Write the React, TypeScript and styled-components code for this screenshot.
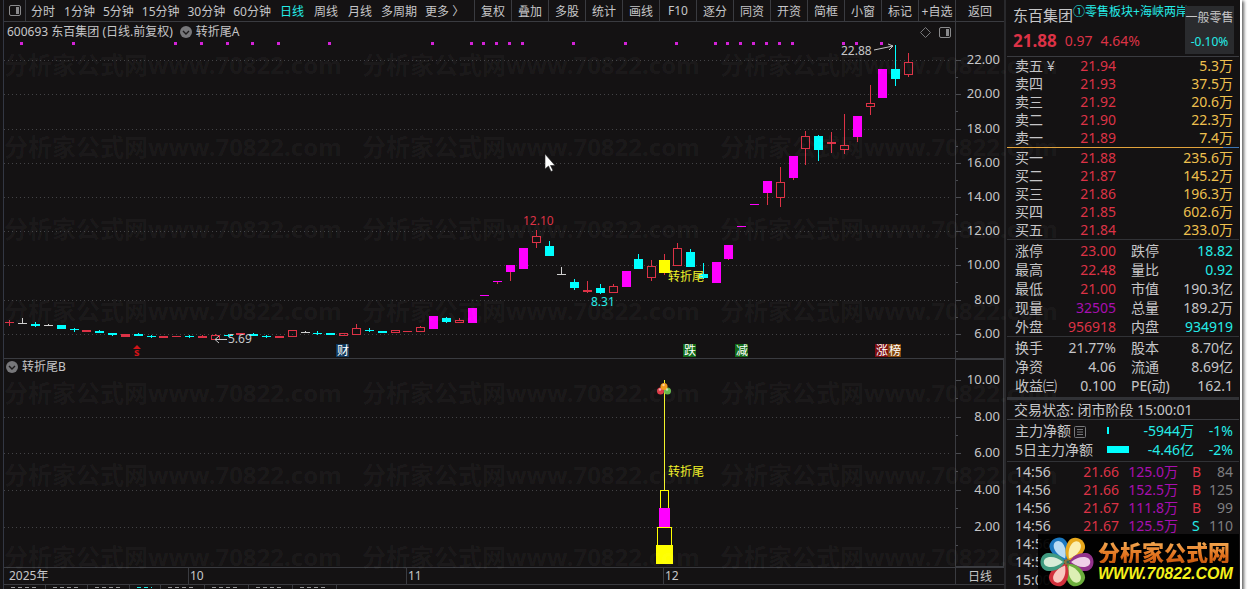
import React from "react";
import styled, { createGlobalStyle } from "styled-components";

const c = {
  bg: "#141213",
  line: "#3a3b40",
  text: "#c6c6c8",
  red: "#dc3246",
  cyan: "#24ece8",
  gold: "#eec04e",
  purple: "#a80fb0",
  grey: "#7e7e80",
  magenta: "#ff00ff",
  aqua: "#00ffff",
};

const Global = createGlobalStyle`
  *, *::before, *::after { box-sizing: border-box; }
  body {
    margin: 0;
    background: #fff;
    overflow: hidden;
    font-family: "Noto Sans", "Noto Sans CJK SC", sans-serif;
    font-size: 12px;
    color: ${c.text};
  }
  button { font: inherit; color: inherit; background: none; border: 0; padding: 0; cursor: pointer; }
  table { border-collapse: collapse; table-layout: fixed; width: 100%; }
  th, td { padding: 0; font-weight: 400; text-align: left; white-space: nowrap; }
`;

const Window = styled.main`
  position: relative;
  display: flex;
  margin-right: 8px;
  padding-left: 3px;
  background: ${c.bg};
  box-shadow: 0 0 0 2px #fff, 3px 2px 3px 1px #666;
`;

const Left = styled.section`
  flex: 1;
  min-width: 0;
  display: flex;
  flex-direction: column;
  border-left: 1px solid #333743;
  border-right: 2px solid #29292c;
`;

const Toolbar = styled.nav`
  display: flex;
  height: 22px;
  border-bottom: 1px solid ${c.line};
  white-space: nowrap;
`;

const IconButton = styled.button`
  display: flex;
  align-items: center;
  justify-content: center;
  width: 22px;
  border-right: 1px solid ${c.line};
`;

const Periods = styled.div`
  display: flex;
  flex: 1;
`;

const Period = styled.button<{ $tight?: boolean; $active?: boolean }>`
  padding: 0 ${(p) => (p.$tight ? 4 : 5)}px;
  color: ${(p) => (p.$active ? c.cyan : c.text)};
`;

const Tool = styled.button<{ $wide?: boolean }>`
  width: ${(p) => (p.$wide ? 49 : 37)}px;
  border-left: 1px solid ${c.line};
`;

const Pane = styled.div`
  display: flex;
  & + & { border-top: 1px solid ${c.line}; }
`;

const Plot = styled.div`
  flex: 1;
  min-width: 0;
`;

const PlotHead = styled.header<{ $h: number }>`
  display: flex;
  align-items: center;
  gap: 4px;
  height: ${(p) => p.$h}px;
  padding: 0 4px 0 2px;
  line-height: 16px;
`;

const Title = styled.span`
  padding: 0 3px 0 1px;
`;

const HeadTools = styled.div`
  display: flex;
  align-items: center;
  gap: 8px;
  margin-left: auto;
`;

const Drawing = styled.svg`
  display: block;
  width: 100%;
  overflow: hidden;
`;

const Axis = styled.div<{ $boxed?: boolean }>`
  width: 49px;
  flex: none;
  border: ${(p) => (p.$boxed ? `1px solid ${c.line}` : "0")};
  border-left: 1px solid ${c.line};
`;

const TimeRow = styled.div`
  display: flex;
  height: 17px;
  border-top: 1px solid ${c.line};
  line-height: 15px;
`;

const TimeCell = styled.div<{ $w?: number }>`
  ${(p) => (p.$w ? `width: ${p.$w}px; flex: none;` : "flex: 1;")}
  padding-left: 1px;
  & + & { border-left: 1px solid ${c.line}; }
  &:first-child { padding-left: 5px; }
`;

const TimeMode = styled.button`
  width: 49px;
  border-left: 1px solid ${c.line};
  line-height: 15px;
`;

const TabEdge = styled.div`
  display: flex;
  height: 5px;
  border-top: 1px solid ${c.line};
`;

const TabStub = styled.div<{ $w: number; $on?: boolean }>`
  width: ${(p) => p.$w}px;
  padding: 2px 8px 0 7px;
  border-right: 1px solid ${c.line};
  &::before {
    content: "";
    display: block;
    height: 1px;
    background: repeating-linear-gradient(90deg, ${(p) => (p.$on ? c.cyan : "#98989a")} 0 4px, transparent 4px 7px);
  }
`;

const Side = styled.aside`
  width: 234px;
  flex: none;
  position: relative;
  padding: 0 1px;
`;

const Quote = styled.header`
  display: flex;
  height: 57px;
  border-bottom: 1px solid ${c.line};
  padding: 6px 5px 0 6px;
`;

const QuoteMain = styled.div`
  flex: 1;
  min-width: 0;
`;

const NameRow = styled.div`
  display: flex;
  height: 22px;
  white-space: nowrap;
`;

const Name = styled.h1`
  margin: 0;
  font-size: 15px;
  font-weight: 400;
  line-height: 18px;
`;

const Sector = styled.a`
  color: ${c.cyan};
  line-height: 12px;
  text-decoration: none;
`;

const PriceRow = styled.div`
  display: flex;
  align-items: center;
  gap: 8px;
  height: 26px;
  font-size: 14px;
  line-height: 26px;
  color: ${c.red};
  strong { font-size: 17px; font-weight: 700; }
`;

const Industry = styled.div`
  width: 49px;
  height: 48px;
  background: #2a2b2e;
  text-align: center;
  line-height: 24px;
  white-space: nowrap;
  em { display: block; font-style: normal; color: ${c.cyan}; }
`;

const Block = styled.div<{ $rule?: number; $top?: number; $bottom?: number }>`
  padding: ${(p) => p.$top ?? 0}px 6px ${(p) => p.$bottom ?? 0}px 8px;
  border-bottom: ${(p) => p.$rule ?? 1}px solid #313236;
  font-size: 14px;
`;

const Spread = styled.div`
  height: 1px;
  background: linear-gradient(90deg, #e2a33c 93%, #3c74b4 93%);
`;

const Row = styled.tr<{ $h: number }>`
  height: ${(p) => p.$h}px;
  line-height: ${(p) => p.$h}px;
`;

const Cell = styled.td<{ $c?: string; $left?: boolean; $indent?: number }>`
  color: ${(p) => p.$c ?? c.text};
  && { text-align: ${(p) => (p.$left ? "left" : "right")}; }
  padding-left: ${(p) => p.$indent ?? 0}px;
`;

const Label = styled.th<{ $indent?: number }>`
  && { padding-left: ${(p) => p.$indent ?? 0}px; }
`;

const Status = styled.p`
  margin: 0;
  padding-left: 7px;
  border-bottom: 1px solid ${c.line};
  font-size: 14px;
  line-height: 19px;
  white-space: nowrap;
`;

const FlowBar = styled.div<{ $w: number }>`
  width: ${(p) => p.$w}px;
  height: 7px;
  background: ${c.aqua};
`;

const NoteIcon = styled.svg`
  margin-left: 3px;
  vertical-align: -2px;
`;

const Brand = styled.a`
  position: absolute;
  right: 1px;
  bottom: 0;
  display: flex;
  align-items: center;
  gap: 2px;
  width: 201px;
  height: 55px;
  background: rgba(0, 0, 0, 0.94);
  text-decoration: none;
  white-space: nowrap;
`;

const BrandName = styled.div`
  font: 900 22px/24px "Noto Sans CJK SC", sans-serif;
  background: linear-gradient(#f6b45c, #e0701c 70%, #c85a10);
  -webkit-background-clip: text;
  background-clip: text;
  color: transparent;
`;

const BrandUrl = styled.div`
  font: italic 700 16px/22px "Liberation Sans", sans-serif;
  color: #f4f01a;
`;

const Marks = styled.div`
  position: absolute;
  inset: 0;
  display: grid;
  grid-template-columns: repeat(3, 358px);
  grid-auto-rows: 82px;
  padding: 24px 0 0 4px;
  overflow: hidden;
  pointer-events: none;
  user-select: none;
  color: rgba(255, 255, 255, 0.045);
  font-size: 24px;
  font-weight: 700;
  line-height: 82px;
  white-space: nowrap;
`;

const Pointer = styled.svg`
  position: absolute;
  left: 544px;
  top: 153px;
`;

/* One candle per trading day: body top, body bottom, high, low, style. */
type Kind = "r" | "h" | "c" | "m" | "w" | "y";
type Candle = [number, number, number, number, Kind];
const candles: Candle[] = [
  [322, 323, 320, 326, "r"], [323, 324, 318, 324, "w"], [324, 326, 322, 327, "c"], [325, 326, 324, 326, "w"],
  [325, 329, 325, 329, "c"], [329, 330, 328, 332, "c"], [330, 332, 330, 332, "r"], [331, 333, 330, 333, "c"],
  [333, 335, 333, 336, "c"], [334, 337, 334, 337, "r"], [334, 336, 333, 336, "c"], [336, 337, 335, 338, "c"],
  [336, 338, 336, 338, "r"], [336, 337, 336, 337, "r"], [336, 337, 335, 338, "c"], [336, 338, 335, 338, "r"],
  [335, 340, 334, 340, "h"], [335, 336, 334, 337, "c"], [333, 335, 333, 335, "r"], [334, 336, 333, 336, "c"],
  [336, 337, 335, 338, "c"], [336, 338, 336, 338, "r"], [330, 337, 330, 337, "h"], [332, 333, 331, 333, "w"],
  [333, 334, 331, 335, "c"], [333, 335, 333, 335, "c"], [333, 336, 333, 336, "h"], [328, 335, 324, 335, "h"],
  [330, 331, 328, 332, "c"], [331, 333, 331, 333, "c"], [330, 333, 330, 333, "h"], [331, 332, 331, 332, "r"],
  [327, 332, 326, 332, "h"], [316, 329, 316, 329, "m"], [318, 322, 317, 323, "c"], [320, 323, 318, 323, "h"],
  [308, 323, 308, 323, "m"], [295, 296, 295, 296, "m"], [281, 282, 281, 284, "m"], [265, 272, 265, 281, "m"],
  [248, 269, 248, 269, "m"], [236, 243, 230, 248, "h"], [246, 256, 241, 256, "c"], [274, 275, 267, 275, "w"],
  [282, 288, 279, 290, "c"], [290, 292, 281, 293, "r"], [288, 293, 284, 294, "c"], [286, 293, 284, 293, "h"],
  [271, 287, 271, 287, "m"], [259, 269, 254, 269, "c"], [266, 278, 260, 281, "h"], [260, 273, 254, 275, "y"],
  [248, 266, 243, 266, "h"], [252, 267, 249, 267, "c"], [274, 278, 263, 279, "c"], [262, 283, 262, 283, "m"],
  [245, 259, 245, 260, "m"], [226, 227, 226, 227, "m"], [204, 205, 204, 205, "m"], [181, 193, 181, 205, "m"],
  [182, 198, 167, 207, "h"], [156, 178, 156, 180, "m"], [136, 149, 131, 165, "h"], [136, 150, 135, 161, "c"],
  [142, 144, 132, 153, "r"], [145, 150, 114, 154, "h"], [116, 137, 116, 142, "m"], [103, 107, 85, 115, "h"],
  [69, 98, 69, 98, "m"], [69, 79, 45, 86, "c"], [62, 75, 53, 77, "h"],
];
const fills: Record<Kind, string> = { r: c.red, h: c.red, c: c.aqua, m: c.magenta, w: "#d0d0d0", y: "#ffff00" };
const signalDays = [1, 5, 13, 15, 17, 19, 21, 25, 33, 36, 37, 38, 39, 40, 44, 48, 52, 55, 56, 57, 58, 59, 60, 61, 65, 66, 68];
const dayX = (i: number) => Math.floor(9.8 + i * 12.84);

const priceTicks: [number, string][] = [
  [60, "22.00"], [94, "20.00"], [129, "18.00"], [163, "16.00"], [197, "14.00"],
  [231, "12.00"], [265, "10.00"], [300, "8.00"], [334, "6.00"],
];
const lowerTicks: [number, string][] = [[380, "10.00"], [417, "8.00"], [453, "6.00"], [490, "4.00"], [527, "2.00"]];

const eventTags: [number, string, string][] = [
  [336, "财", "#11385c"], [683, "跌", "#126a18"], [735, "减", "#126a18"], [875, "涨", "#7c0c10"], [888, "榜", "#84460c"],
];

function CandleShape({ i, d }: { i: number; d: Candle }) {
  const [top, bottom, high, low, kind] = d;
  const x = dayX(i);
  const wick = kind === "m" || kind === "y" ? c.red : fills[kind];
  return (
    <g shapeRendering="crispEdges">
      {high < top && <rect x={x} y={high} width={1} height={top - high} fill={wick} />}
      {low > bottom && <rect x={x} y={bottom} width={1} height={low - bottom} fill={wick} />}
      {kind === "h" ? (
        <rect x={x - 3.5} y={top + 0.5} width={8} height={bottom - top - 1} fill="none" stroke={c.red} />
      ) : kind === "y" ? (
        <rect x={x - 5} y={top} width={11} height={bottom - top} fill={fills.y} />
      ) : (
        <rect x={x - 4} y={top} width={9} height={bottom - top} fill={fills[kind]} />
      )}
    </g>
  );
}

function Grid({ ys }: { ys: number[] }) {
  return (
    <g stroke="#434346" strokeDasharray="1 3" shapeRendering="crispEdges">
      {ys.map((y) => <line key={y} x1={4} x2="100%" y1={y + 0.5} y2={y + 0.5} />)}
    </g>
  );
}

function Scale({ ticks, top, height, step }: { ticks: [number, string][]; top: number; height: number; step: number }) {
  return (
    <Drawing height={height}>
      <g transform={`translate(0 ${-top})`} fill={c.text} fontSize={13}>
        {ticks.map(([y, t]) => (
          <g key={t}>
            <path d={`M0 ${y + 0.5}h5M0 ${y + step + 0.5}h2`} stroke="#4a4b50" />
            <text x={44} y={y + 4} textAnchor="end">{t}</text>
          </g>
        ))}
      </g>
    </Drawing>
  );
}

const Chevron = () => (
  <svg width="12" height="12" viewBox="0 0 12 12">
    <circle cx="6" cy="6" r="6" fill="#77777a" />
    <path d="M3 5l3 3 3-3" fill="none" stroke="#1c1a1b" strokeWidth="1.4" />
  </svg>
);

const PanelIcon = () => (
  <svg width="12" height="11" viewBox="0 0 12 11">
    <rect x=".5" y=".5" width="11" height="10" rx="1.5" fill="none" stroke="#8a8a8c" />
    <rect x="7" y="2" width="3" height="7" fill="#8a8a8c" />
  </svg>
);

const petals: [number, string, string][] = [
  [-118, "#1b78c0", "#b8dcf4"], [-60, "#e8a81c", "#fbeeb0"], [0, "#93328c", "#efcfe8"],
  [60, "#6cae3c", "#dcefb4"], [120, "#d0303c", "#f8c8c0"], [180, "#3f9a80", "#d8ecd8"],
];

const Flower = () => (
  <svg width="58" height="54" viewBox="-29 -27 58 54">
    {petals.map(([a, edge, core]) => (
      <g key={a} transform={`rotate(${a})`}>
        <path d="M2 0C6-7 13-9.5 19-9C29-8 29 8 19 9C13 9.500 6 7 2 0Z" fill={edge} />
        <path d="M4 0C9-4 13-5.500 18-5C25-4 25 4 18 5C13 5.500 9 4 4 0Z" fill={core} />
      </g>
    ))}
    <circle r="3" fill="#8a7440" />
    <circle r="1.500" cx="1" fill="#2f6a58" />
  </svg>
);

const sells = [["卖五 ¥", "21.94", "5.3万"], ["卖四", "21.93", "37.5万"], ["卖三", "21.92", "20.6万"], ["卖二", "21.90", "22.3万"], ["卖一", "21.89", "7.4万"]];
const buys = [["买一", "21.88", "235.6万"], ["买二", "21.87", "145.2万"], ["买三", "21.86", "196.3万"], ["买四", "21.85", "602.6万"], ["买五", "21.84", "233.0万"]];
const stats = [
  ["涨停", "23.00", c.red, "跌停", "18.82", c.cyan],
  ["最高", "22.48", c.red, "量比", "0.92", c.cyan],
  ["最低", "21.00", c.red, "市值", "190.3亿", c.text],
  ["现量", "32505", c.purple, "总量", "189.2万", c.text],
  ["外盘", "956918", c.red, "内盘", "934919", c.cyan],
];
const basics = [
  ["换手", "21.77%", c.text, "股本", "8.70亿", c.text],
  ["净资", "4.06", c.text, "流通", "8.69亿", c.text],
  ["收益㈢", "0.100", c.text, "PE(动)", "162.1", c.text],
];
const deals = [
  ["14:56", "21.66", "125.0万", "B", "84"], ["14:56", "21.66", "152.5万", "B", "125"],
  ["14:56", "21.67", "111.8万", "B", "99"], ["14:56", "21.67", "125.5万", "S", "110"],
  ["14:56", "", "", "", ""], ["14:56", "", "", "", ""], ["15:00", "", "", "", ""],
];

function Book({ rows }: { rows: string[][] }) {
  return (
    <table>
      <colgroup><col width={46} /><col width={55} /><col /></colgroup>
      <tbody>
        {rows.map(([n, p, v]) => (
          <Row key={n} $h={18}><Label scope="row">{n}</Label><Cell $c={c.red}>{p}</Cell><Cell $c={c.gold}>{v}</Cell></Row>
        ))}
      </tbody>
    </table>
  );
}

function Pairs({ rows }: { rows: string[][] }) {
  return (
    <table>
      <colgroup><col width={46} /><col width={55} /><col width={60} /><col /></colgroup>
      <tbody>
        {rows.map(([a, av, ac, b, bv, bc]) => (
          <Row key={a} $h={19}>
            <Label scope="row">{a}</Label><Cell $c={ac}>{av}</Cell>
            <Label scope="row" $indent={15}>{b}</Label><Cell $c={bc}>{bv}</Cell>
          </Row>
        ))}
      </tbody>
    </table>
  );
}

const periods: [string, boolean][] = [
  ["分时", false], ["1分钟", true], ["5分钟", true], ["15分钟", true], ["30分钟", true], ["60分钟", true],
  ["日线", false], ["周线", false], ["月线", false], ["多周期", true], ["更多 〉", true],
];
const tools = ["复权", "叠加", "多股", "统计", "画线", "F10", "逐分", "同资", "开资", "简框", "小窗", "标记", "+自选"];

export default function App() {
  return (
    <>
      <Global />
      <Window>
        <Marks aria-hidden="true">
          {Array.from({ length: 21 }, (_, i) => <span key={i}>分析家公式网www.70822.com</span>)}
        </Marks>
        <Left>
          <Toolbar>
            <IconButton aria-label="侧栏"><PanelIcon /></IconButton>
            <Periods>
              {periods.map(([p, tight]) => <Period key={p} $tight={tight} $active={p === "日线"}>{p}</Period>)}
            </Periods>
            {tools.map((t) => <Tool key={t}>{t}</Tool>)}
            <Tool $wide>返回</Tool>
          </Toolbar>

          <Pane>
            <Plot>
              <PlotHead $h={20}>
                <Title>600693 东百集团 (日线.前复权)</Title>
                <Chevron />
                <span>转折尾A</span>
                <HeadTools>
                  <svg width="11" height="11" viewBox="0 0 11 11"><path d="M5.500 .5l5 5-5 5-5-5z" fill="none" stroke="#77777a" /></svg>
                  <PanelIcon />
                </HeadTools>
              </PlotHead>
              <Drawing height={316}>
                <g transform="translate(-4 -42)">
                  <Grid ys={priceTicks.map(([y]) => y)} />
                  {signalDays.map((d) => <rect key={d} x={dayX(d) - 2} y={42} width={3} height={3} fill="#d322d8" />)}
                  {candles.map((d, i) => <CandleShape key={i} i={i} d={d} />)}
                  <text x={841} y={55} fontSize={12} fill={c.text}>22.88</text>
                  <path d="M874 50L893 46M888 44L893 46L889 50" fill="none" stroke={c.text} />
                  <text x={523} y={225} fontSize={12} fill={c.red}>12.10</text>
                  <text x={591} y={306} fontSize={12} fill={c.cyan}>8.31</text>
                  <path d="M227 339.500H215M219 336L215 339.500L219 343" fill="none" stroke={c.text} />
                  <text x={228} y={343} fontSize={12} fill={c.text}>5.69</text>
                  <text x={668} y={281} fontSize={12} fill="#f2f22a">转折尾</text>
                  <path d="M133 349L137 345L141 349Z" fill="#d01418" />
                  <text x={134} y={356} fontSize={11} fontWeight={700} fill="#d01418">s</text>
                  {eventTags.map(([x, t, f]) => (
                    <g key={t}>
                      <rect x={x} y={344} width={13} height={13} fill={f} />
                      <text x={x + 1} y={355} fontSize={12} fill="#fff">{t}</text>
                    </g>
                  ))}
                </g>
              </Drawing>
            </Plot>
            <Axis><Scale ticks={priceTicks} top={22} height={336} step={17} /></Axis>
          </Pane>

          <Pane>
            <Plot>
              <PlotHead $h={16}><Chevron /><span>转折尾B</span></PlotHead>
              <Drawing height={192}>
                <g transform="translate(-4 -375)" shapeRendering="crispEdges">
                  <Grid ys={[417, 453, 490, 527]} />
                  <rect x={664} y={380} width={1} height={110} fill="#f2f22a" />
                  <rect x={660.5} y={490.5} width={8} height={18} fill={c.bg} stroke="#ffff00" />
                  <rect x={659} y={508} width={11} height={19} fill={c.magenta} />
                  <rect x={657.5} y={527.5} width={14} height={18} fill={c.bg} stroke="#ffff00" />
                  <rect x={656} y={545} width={17} height={19} fill="#ffff00" />
                  <text x={668} y={476} fontSize={12} fill="#f2f22a">转折尾</text>
                </g>
                <g transform="translate(-4 -375)">
                  <circle cx={660.5} cy={391} r={3.5} fill="#e03c48" />
                  <circle cx={667.5} cy={391} r={3.5} fill="#66b84a" />
                  <circle cx={664} cy={386.5} r={3.5} fill="#f29a1c" />
                  <g fill="#fff" opacity={0.55}>
                    <circle cx={660} cy={389.5} r={1.2} /><circle cx={667} cy={389.5} r={1.2} /><circle cx={663.5} cy={385} r={1.2} />
                  </g>
                </g>
              </Drawing>
            </Plot>
            <Axis $boxed><Scale ticks={lowerTicks} top={360} height={206} step={18} /></Axis>
          </Pane>

          <TimeRow>
            <TimeCell $w={184}>2025年</TimeCell>
            <TimeCell $w={218}>10</TimeCell>
            <TimeCell $w={257}>11</TimeCell>
            <TimeCell>12</TimeCell>
            <TimeMode>日线</TimeMode>
          </TimeRow>
          <TabEdge>
            {[42, 42, 42, 31, 44, 44, 44, 44].map((w, i) => <TabStub key={i} $w={w} $on={i === 3} />)}
          </TabEdge>
        </Left>

        <Side>
          <Quote>
            <QuoteMain>
              <NameRow><Name>东百集团</Name><Sector href="#sector">①零售板块+海峡两岸</Sector></NameRow>
              <PriceRow><strong>21.88</strong><span>0.97</span><span>4.64%</span></PriceRow>
            </QuoteMain>
            <Industry>一般零售<em>-0.10%</em></Industry>
          </Quote>
          <Block $rule={0}><Book rows={sells} /></Block>
          <Spread />
          <Block $top={1}><Book rows={buys} /></Block>
          <Block $top={1}><Pairs rows={stats} /></Block>
          <Block $rule={3} $top={1} $bottom={2}><Pairs rows={basics} /></Block>
          <Status>交易状态: 闭市阶段 15:00:01</Status>
          <Block $top={1} $bottom={2}>
            <table>
              <colgroup><col width={92} /><col width={26} /><col width={61} /><col /></colgroup>
              <tbody>
                <Row $h={19}>
                  <Label scope="row">主力净额
                    <NoteIcon width="12" height="12" viewBox="0 0 12 12">
                      <rect x=".5" y=".5" width="11" height="11" rx="1" fill="none" stroke="#77777a" />
                      <path d="M3 3.500h6M3 6h6M3 8.500h6" stroke="#77777a" />
                    </NoteIcon>
                  </Label>
                  <Cell><FlowBar $w={2} /></Cell><Cell $c={c.cyan}>-5944万</Cell><Cell $c={c.cyan}>-1%</Cell>
                </Row>
                <Row $h={19}>
                  <Label scope="row">5日主力净额</Label>
                  <Cell><FlowBar $w={22} /></Cell><Cell $c={c.cyan}>-4.46亿</Cell><Cell $c={c.cyan}>-2%</Cell>
                </Row>
              </tbody>
            </table>
          </Block>
          <Block $rule={0} $top={1}>
            <table>
              <colgroup><col width={46} /><col width={58} /><col width={59} /><col width={24} /><col /></colgroup>
              <tbody>
                {deals.map(([t, p, v, s, n], i) => (
                  <Row key={i} $h={18}>
                    <Label scope="row">{t}</Label>
                    <Cell $c={c.red}>{p}</Cell>
                    <Cell $c={c.purple}>{v}</Cell>
                    <Cell $left $indent={14} $c={s === "S" ? c.cyan : c.red}>{s}</Cell>
                    <Cell $c={c.grey}>{n}</Cell>
                  </Row>
                ))}
              </tbody>
            </table>
          </Block>
          <Brand href="#home">
            <Flower />
            <div>
              <BrandName>分析家公式网</BrandName>
              <BrandUrl>WWW.70822.COM</BrandUrl>
            </div>
          </Brand>
        </Side>
        <Pointer width="12" height="20" viewBox="0 0 12 20">
          <path d="M1 1V16L4.500 13L7 18.500L9 17.500L6.500 12.500H11Z" fill="#fff" stroke="#222" strokeWidth=".6" />
        </Pointer>
      </Window>
    </>
  );
}
